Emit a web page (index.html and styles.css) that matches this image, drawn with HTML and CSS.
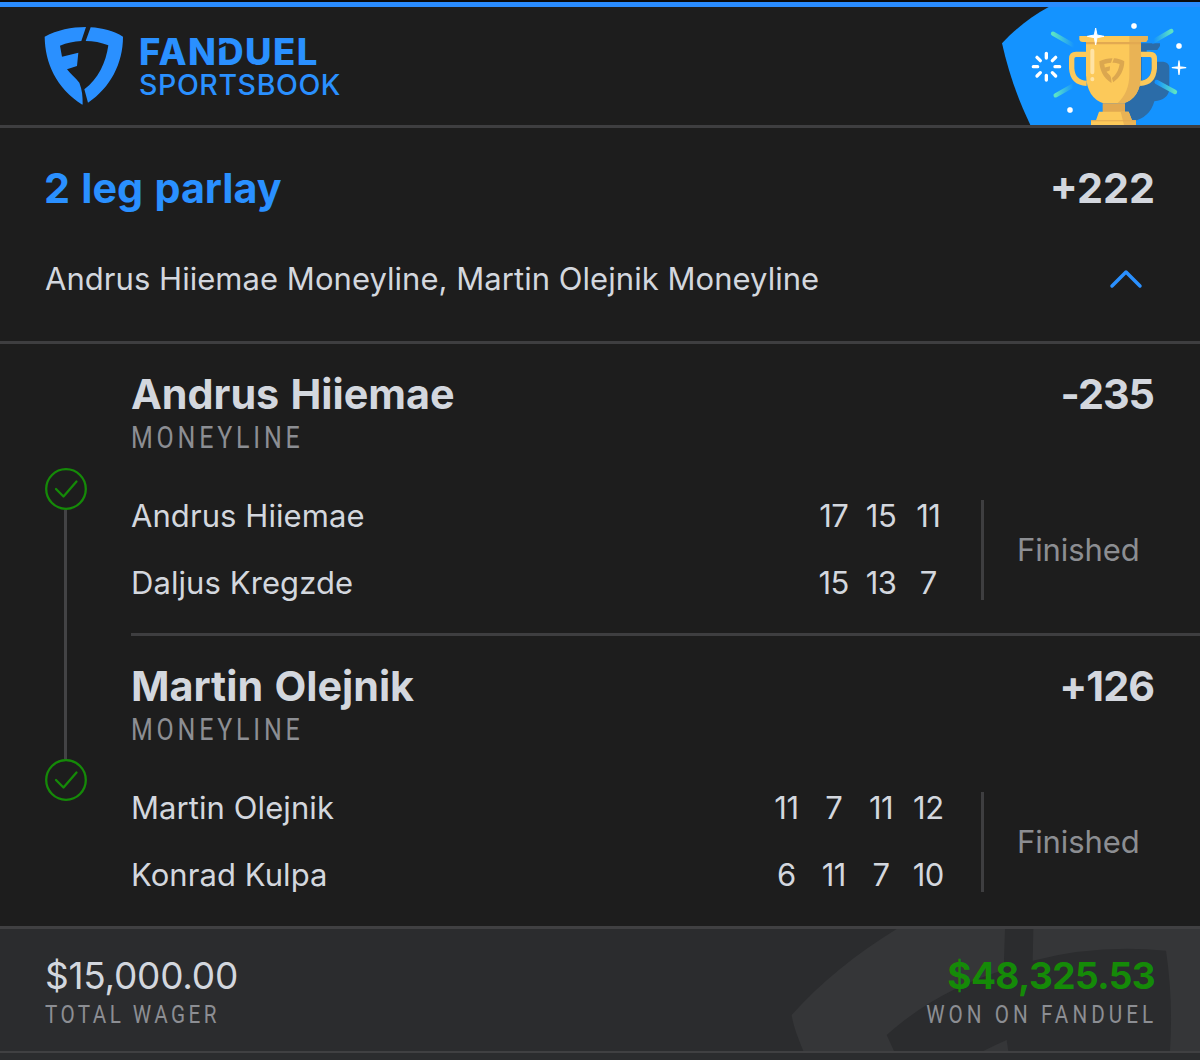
FILE: index.html
```html
<!DOCTYPE html>
<html lang="en">
<head>
<meta charset="utf-8">
<title>FanDuel Sportsbook – 2 leg parlay</title>
<link rel="stylesheet" href="styles.css">
</head>
<body>
<div class="slip">
  <header class="header">
    <div class="brand">
      <svg class="shield" viewBox="132 78 240 240" aria-hidden="true">
        <path d="M258 81C214 81 172 90 134 110C135 188 168 264 247 314L248 312C248 290 247 270 238 248C226 233 211 222 201 208L231 198L235 158L186 170L180 137C200 129 222 124 244 123Z"/>
        <path d="M272 82C307 84 341 93 369 110C369 190 331 263 264 308L253 268C294 238 318 187 325 136C303 127 280 123 257 123Z"/>
      </svg>
      <div class="wordmark">
        <span class="brand-name">FAN<span class="brand-d">D</span>UEL</span>
        <span class="brand-sub">SPORTSBOOK</span>
      </div>
    </div>
    <svg class="trophy" viewBox="36 21 594 354" aria-hidden="true">
      <defs>
        <linearGradient id="ray-l" x1="0" x2="1"><stop offset="0" stop-color="#5ce3c4"/><stop offset="1" stop-color="#1493ff"/></linearGradient>
        <linearGradient id="ray-r" x1="1" x2="0"><stop offset="0" stop-color="#5ce3c4"/><stop offset="1" stop-color="#1493ff"/></linearGradient>
      </defs>
      <path fill="#1493ff" d="M176 21H630V375H121C84 298 55 216 36 130C72 90 122 50 176 21Z"/>
      <path fill="#2b6ca8" d="M440 130H510V138L502 150H470V185H520Q538 187 538 204V268Q534 300 493 304Q480 352 430 364L400 340Z"/>
      <path fill="#1493ff" d="M455 171H485V204Q483 238 455 242Z"/>
      <g stroke-width="13" stroke-linecap="round">
        <path stroke="url(#ray-l)" d="M189 101L252 137"/>
        <path stroke="url(#ray-l)" d="M197 286L250 256"/>
        <path stroke="url(#ray-r)" d="M544 93L490 124"/>
        <path stroke="url(#ray-r)" d="M555 276L500 246"/>
      </g>
      <g fill="none" stroke="#fcc95a" stroke-width="16">
        <path d="M290 163H258Q245 163 245 176V205Q248 248 290 250"/>
        <path d="M452 163H480Q493 163 493 176V205Q490 248 450 250"/>
      </g>
      <path fill="#fcc95a" d="M288 124H453V226Q451 296 400 310H340Q291 294 288 226Z"/>
      <path fill="#e9b355" d="M418 124H453V226Q451 296 400 310H382Q418 278 418 222Z"/>
      <path fill="#e2a951" d="M288 124H453V133H288ZM338 310H405V336H338Z"/>
      <path fill="#fcc95a" d="M268 108H473V119Q471 126 463 126H278Q270 126 268 119ZM327 335H416L426 361H438V375H303V361H318Z"/>
      <path fill="#e9b355" d="M418 108H473V119Q471 126 463 126H418ZM392 335H416L426 361H438V375H402Z"/>
      <path fill="#e2a951" d="M303 361H438V364H303Z"/>
      <path stroke="#ffe3a4" stroke-width="12" stroke-linecap="round" d="M307 152V217M307 237V238"/>
      <g fill="#dba74f" transform="translate(285.500 148.800) scale(.318)">
        <path d="M258 81C214 81 172 90 134 110C135 188 168 264 247 314L248 312C248 290 247 270 238 248C226 233 211 222 201 208L231 198L235 158L186 170L180 137C200 129 222 124 244 123Z"/>
        <path d="M272 82C307 84 341 93 369 110C369 190 331 263 264 308L253 268C294 238 318 187 325 136C303 127 280 123 257 123Z"/>
      </g>
      <g fill="#fff" stroke="#fff" stroke-linejoin="round">
        <path stroke-width="3" d="M317 84L321 105L342 109L321 113L317 135L313 113L292 109L313 105Z"/>
        <path stroke-width="4" d="M567 183L569 201L587 203L569 205L567 223L565 205L547 203L565 201Z"/>
        <circle cx="432" cy="78" r="8"/><circle cx="567" cy="138" r="8"/><circle cx="240" cy="330" r="8"/>
      </g>
      <path stroke="#fff" stroke-width="10" stroke-linecap="round" d="M169 160V174M169 226V240M130 200H143M195 200H209M141 172L151 182M187 218L197 228M197 172L187 182M151 218L141 228"/>
    </svg>
  </header>

  <section class="summary">
    <div class="row">
      <h1 class="title accent">2 leg parlay</h1>
      <span class="title odds">+222</span>
    </div>
    <div class="row picks">
      <p class="body-text">Andrus Hiiemae Moneyline, Martin Olejnik Moneyline</p>
      <svg class="chevron" viewBox="0 0 34 20" aria-hidden="true"><path d="M3 17L17 3L31 17"/></svg>
    </div>
  </section>

  <main class="legs">
    <div class="timeline">
      <svg class="check" viewBox="0 0 42 42" aria-hidden="true"><circle cx="21" cy="21" r="19.800"/><path d="M11 21L18.500 28.500L31.500 13.500"/></svg>
      <span class="connector"></span>
      <svg class="check" viewBox="0 0 42 42" aria-hidden="true"><circle cx="21" cy="21" r="19.800"/><path d="M11 21L18.500 28.500L31.500 13.500"/></svg>
    </div>
    <div class="leg-list">
      <article class="leg">
        <div class="row">
          <h2 class="title">Andrus Hiiemae</h2>
          <span class="title odds leg-odds">-235</span>
        </div>
        <p class="market"><span class="condensed">MONEYLINE</span></p>
        <div class="match">
          <div class="players">
            <div class="player"><span class="name">Andrus Hiiemae</span><span class="score">17</span><span class="score">15</span><span class="score">11</span></div>
            <div class="player"><span class="name">Daljus Kregzde</span><span class="score">15</span><span class="score">13</span><span class="score">7</span></div>
          </div>
          <div class="status">Finished</div>
        </div>
      </article>
      <article class="leg">
        <div class="row">
          <h2 class="title">Martin Olejnik</h2>
          <span class="title odds leg-odds">+126</span>
        </div>
        <p class="market"><span class="condensed">MONEYLINE</span></p>
        <div class="match">
          <div class="players">
            <div class="player"><span class="name">Martin Olejnik</span><span class="score">11</span><span class="score">7</span><span class="score">11</span><span class="score">12</span></div>
            <div class="player"><span class="name">Konrad Kulpa</span><span class="score">6</span><span class="score">11</span><span class="score">7</span><span class="score">10</span></div>
          </div>
          <div class="status">Finished</div>
        </div>
      </article>
    </div>
  </main>

  <footer class="totals">
    <svg class="watermark" viewBox="0 27 1320 366" aria-hidden="true">
      <path d="M95 285C180 190 290 100 410 27H735L731 150C600 190 480 255 380 345L402 393H130C115 355 100 320 95 285Z"/>
      <path d="M820 27H1320V393H1230Q1240 240 1218 92Q1010 72 818 122Z"/>
      <path d="M670 393Q705 375 740 360L745 393Z"/>
    </svg>
    <div class="total">
      <span class="amount">$15,000.00</span>
      <span class="caption condensed">TOTAL WAGER</span>
    </div>
    <div class="total total-won">
      <span class="amount won">$48,325.53</span>
      <span class="caption condensed">WON ON FANDUEL</span>
    </div>
  </footer>
  <div class="tail"></div>
</div>
</body>
</html>
```
FILE: styles.css
```css
* { box-sizing: border-box; }

body {
  margin: 0;
  background: #1d1d1d;
  color: #d3d7de;
  font-family: Inter, "Liberation Sans", sans-serif;
}

h1, h2, p { margin: 0; }
svg { display: block; flex: none; }

.slip {
  display: flex;
  flex-direction: column;
  height: 1060px;
  overflow: hidden;
  border-top: 2px solid #0b0b0d;
}

.row {
  display: flex;
  justify-content: space-between;
  align-items: center;
}

/* Header */
.header {
  display: flex;
  justify-content: space-between;
  height: 126px;
  border-top: 5px solid #2a8cff;
  border-bottom: 3px solid #3e3e40;
}

.brand {
  display: flex;
  gap: 15px;
  padding: 19px 0 0 44px;
}

.shield { width: 80px; height: 80px; fill: #2a90ff; }

.wordmark {
  display: flex;
  flex-direction: column;
  padding-top: 8px;
  color: #2a90ff;
  white-space: nowrap;
}

.brand-name {
  font-size: 36.500px;
  font-weight: 800;
  line-height: 36px;
  letter-spacing: 1.400px;
}

.brand-d { position: relative; }
.brand-d::after {
  content: "";
  position: absolute;
  left: 1px;
  top: 14px;
  width: 9px;
  height: 3px;
  background: #1d1d1d;
  transform: rotate(-25deg);
}

.brand-sub {
  font-size: 28.500px;
  font-weight: 450;
  line-height: 30px;
  letter-spacing: 0.600px;
}

.trophy { width: 198px; height: 118px; }

/* Bet summary */
.summary {
  height: 216px;
  padding: 36px 45px 0;
  border-bottom: 3px solid #3e3e40;
}

.title {
  font-size: 41.300px;
  font-weight: 700;
  line-height: 48px;
  word-spacing: 1.500px;
  white-space: nowrap;
}

.accent { color: #2a90ff; margin-left: -1px; }
.leg-odds { letter-spacing: -1px; }
.picks { margin-top: 46px; padding-right: 12px; }

.body-text {
  font-size: 31px;
  font-weight: 400;
  line-height: 41px;
  letter-spacing: 0.040px;
  white-space: nowrap;
}

.chevron {
  width: 34px;
  height: 20px;
  fill: none;
  stroke: #2a90ff;
  stroke-width: 3.500;
  stroke-linecap: round;
  stroke-linejoin: round;
}

/* Legs */
.legs { display: flex; height: 582px; }

.timeline {
  display: flex;
  flex-direction: column;
  align-items: center;
  width: 131px;
  padding: 124px 44px 125px 44px;
}

.check {
  width: 42px;
  height: 42px;
  fill: none;
  stroke: #158a08;
  stroke-width: 2.300;
  stroke-linecap: round;
  stroke-linejoin: round;
}

.connector { flex: 1; width: 3px; background: #434345; }
.leg-list { flex: 1; }
.leg { height: 289px; padding-top: 26px; }

.leg + .leg {
  height: 293px;
  border-top: 3px solid #3e3e40;
}

.leg .row { padding-right: 46px; }

.condensed {
  display: inline-block;
  font-family: Roboto, sans-serif;
  font-weight: 400;
  color: #8c8e93;
  white-space: nowrap;
  transform: scaleX(0.780);
  transform-origin: left center;
}

.market { height: 38px; }

.market .condensed {
  font-size: 32px;
  line-height: 38px;
  letter-spacing: 4.900px;
}

.match {
  display: flex;
  height: 100px;
  margin-top: 44px;
}

.players {
  display: flex;
  flex-direction: column;
  justify-content: space-between;
  width: 850px;
  padding: 0 29px 2px 0;
}

.player {
  display: flex;
  font-size: 31px;
  font-weight: 400;
  line-height: 31px;
}

.name { flex: 1; white-space: nowrap; letter-spacing: 0.080px; }
.score { width: 47.300px; text-align: center; letter-spacing: -0.500px; }

.status {
  padding-left: 33px;
  border-left: 3px solid #3e3e40;
  color: #8c8e92;
  font-size: 31px;
  font-weight: 400;
  line-height: 100px;
  letter-spacing: -0.100px;
}

/* Totals */
.totals {
  position: relative;
  display: flex;
  justify-content: space-between;
  height: 127px;
  padding: 27px 45px 0;
  border-top: 3px solid #404042;
  border-bottom: 2px solid #404042;
  background: #2b2c2e;
}

.watermark {
  position: absolute;
  top: 0;
  right: 0;
  width: 440px;
  height: 122px;
  fill: #353638;
}

.total {
  position: relative;
  display: flex;
  flex-direction: column;
  align-items: flex-start;
}

.total-won { align-items: flex-end; }

.amount {
  font-size: 37px;
  font-weight: 400;
  line-height: 40px;
  letter-spacing: -0.250px;
}

.won { color: #158a08; font-weight: 700; letter-spacing: -0.600px; }

.caption {
  font-size: 26.500px;
  line-height: 35px;
  letter-spacing: 4.400px;
}

.total-won .caption {
  margin-right: -2px;
  letter-spacing: 5.200px;
  transform-origin: right center;
}

.tail { flex: 1; background: #2b2c2e; }
```
